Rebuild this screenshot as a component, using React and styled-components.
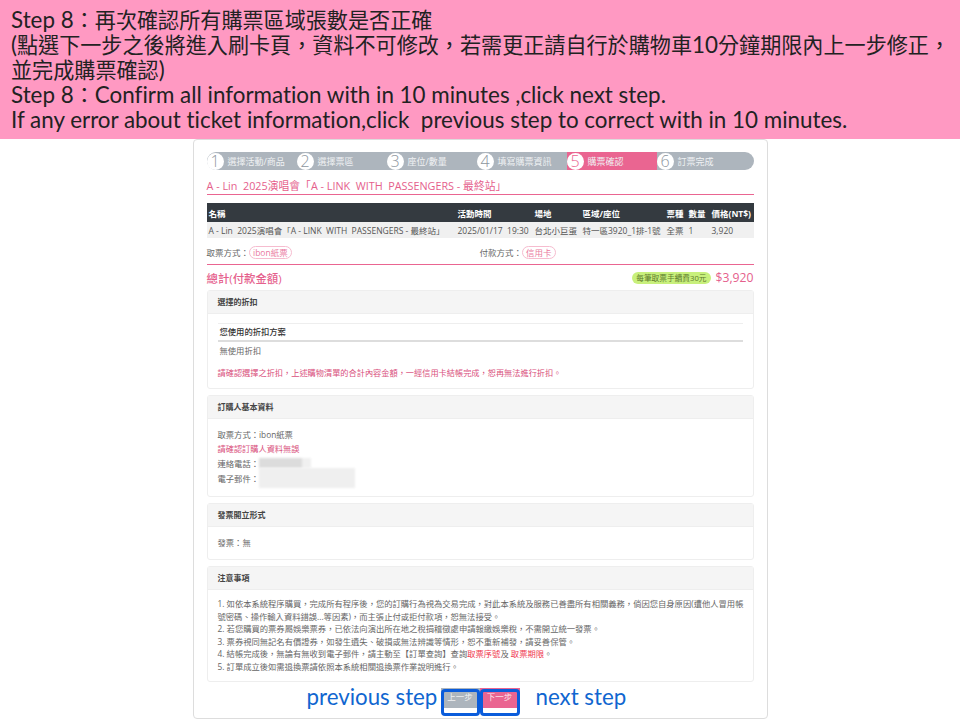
import React from 'react'
import styled, { createGlobalStyle } from 'styled-components'

const GlobalStyle = createGlobalStyle`
  html, body {
    margin: 0;
    padding: 0;
    background: #fff;
    overflow: hidden;
  }
  * { box-sizing: border-box; }
`

const STEPS = ['選擇活動/商品', '選擇票區', '座位/數量', '填寫購票資訊', '購票確認', '訂票完成']
const EVENT = 'A - Lin  2025演唱會「A - LINK  WITH  PASSENGERS - 最終站」'

const App = () => {
  return (
    <Page>
      <GlobalStyle />
      <Banner>
        <BannerLine>Step 8<Cjk>：再次確認所有購票區域張數是否正確</Cjk></BannerLine>
        <BannerLine>(<Cjk>點選下一步之後將進入刷卡頁，資料不可修改，若需更正請自行於購物車</Cjk>10<Cjk>分鐘期限內上一步修正，</Cjk></BannerLine>
        <BannerLine><Cjk>並完成購票確認</Cjk>)</BannerLine>
        <BannerLine>Step 8<Cjk>：</Cjk>Confirm all information with in 10 minutes ,click next step.</BannerLine>
        <BannerLine>If any error about ticket information,click  previous step to correct with in 10 minutes.</BannerLine>
      </Banner>

      <Card>
        <Steps>
          {STEPS.map((s, i) => (
            <Step key={s} $active={i === 4}>
              <StepNum $active={i === 4}>{i + 1}</StepNum>
              <span>{s}</span>
            </Step>
          ))}
        </Steps>

        <EventTitle>{EVENT}</EventTitle>

        <HeadRow>
          <span>名稱</span>
          <span>活動時間</span>
          <span>場地</span>
          <span>區域/座位</span>
          <span>票種</span>
          <span>數量</span>
          <span>價格(NT$)</span>
        </HeadRow>
        <DataRow>
          <span>{EVENT}</span>
          <span>2025/01/17  19:30</span>
          <span>台北小巨蛋</span>
          <span>特一區3920_1排-1號</span>
          <span>全票</span>
          <span>1</span>
          <span>3,920</span>
        </DataRow>

        <Methods>
          <Method>取票方式：<Tag>ibon紙票</Tag></Method>
          <Method>付款方式：<Tag>信用卡</Tag></Method>
        </Methods>

        <Total>
          <TotalLabel>總計(付款金額)</TotalLabel>
          <Fee>每筆取票手續費30元</Fee>
          <Amount>$3,920</Amount>
        </Total>

        <Panel $height={99}>
          <PanelHead>選擇的折扣</PanelHead>
          <DiscountBody>
            <DiscountHead>您使用的折扣方案</DiscountHead>
            <DiscountText>無使用折扣</DiscountText>
            <Warn>請確認選擇之折扣，上述購物清單的合計內容金額，一經信用卡結帳完成，恕再無法進行折扣。</Warn>
          </DiscountBody>
        </Panel>

        <Panel $height={102}>
          <PanelHead>訂購人基本資料</PanelHead>
          <PanelBody>
            <Line>取票方式：ibon紙票</Line>
            <Line><Warn as="span">請確認訂購人資料無誤</Warn></Line>
            <Line>連絡電話：<PhoneBlur /></Line>
            <Line>電子郵件：<MailBlur /></Line>
          </PanelBody>
        </Panel>

        <Panel $height={57}>
          <PanelHead>發票開立形式</PanelHead>
          <PanelBody>
            <Line>發票：無</Line>
          </PanelBody>
        </Panel>

        <Panel $height={116}>
          <PanelHead>注意事項</PanelHead>
          <Notes>
            <div>1. 如依本系統程序購買，完成所有程序後，您的訂購行為視為交易完成，對此本系統及服務已善盡所有相關義務，倘因您自身原因(遭他人冒用帳</div>
            <div>號密碼、操作輸入資料錯誤...等因素)，而主張止付或拒付款項，恕無法接受。</div>
            <div>2. 若您購買的票券屬娛樂票券，已依法向演出所在地之稅捐稽徵處申請報繳娛樂稅，不需開立統一發票。</div>
            <div>3. 票券視同無記名有價證券，如發生遺失、破損或無法辨識等情形，恕不重新補發，請妥善保管。</div>
            <div>4. 結帳完成後，無論有無收到電子郵件，請主動至【訂單查詢】查詢<Red>取票序號</Red>及 <Red>取票期限</Red>。</div>
            <div>5. 訂單成立後如需退換票請依照本系統相關退換票作業說明進行。</div>
          </Notes>
        </Panel>

        <Footer>
          <Hint>previous step</Hint>
          <Frame $width={39}>
            <StepButton $color="#adb5bd">上一步</StepButton>
          </Frame>
          <Frame $width={40}>
            <StepButton $color="#ea6591">下一步</StepButton>
          </Frame>
          <NextHint>next step</NextHint>
        </Footer>
      </Card>
    </Page>
  )
}

const Page = styled.div`
  width: 960px;
  height: 720px;
  overflow: hidden;
  display: flex;
  flex-direction: column;
  align-items: center;
`

const Banner = styled.div`
  width: 960px;
  height: 139px;
  flex-shrink: 0;
  background: #ff99c2;
  padding: 7px 0 0 11px;
  font-family: "Lato", "Noto Sans CJK TC", sans-serif;
  font-size: 22.4px;
  color: #222;
  white-space: pre;
  font-variant-ligatures: none;
`

const BannerLine = styled.div`
  height: 25px;
  line-height: 25px;
`

const Cjk = styled.span`
  font-size: 21.1px;
`

const Card = styled.div`
  width: 575px;
  height: 580px;
  flex-shrink: 0;
  border: 1px solid #ddd;
  border-radius: 4px;
  padding: 12px 12px 0 13px;
  font-family: "Open Sans", "Noto Sans CJK TC", sans-serif;
  font-size: 8.5px;
  color: #666;
  white-space: pre;
`

const Steps = styled.div`
  display: grid;
  grid-template-columns: repeat(5, 90px) 1fr;
  width: 547px;
  height: 18px;
  background: #adb5bd;
  border-radius: 9px;
`

const Step = styled.div`
  display: flex;
  align-items: center;
  gap: 4px;
  color: #f0f2f4;
  font-size: 9px;
  background: ${p => (p.$active ? '#ea6591' : 'transparent')};
`

const StepNum = styled.span`
  width: 17px;
  height: 17px;
  border-radius: 50%;
  background: #fff;
  color: ${p => (p.$active ? '#ea6591' : '#8d969e')};
  font-size: 16px;
  font-weight: 300;
  line-height: 17px;
  text-align: center;
  flex-shrink: 0;
`

const EventTitle = styled.div`
  margin-top: 8px;
  height: 17px;
  width: 547px;
  border-bottom: 1px solid #ea6591;
  color: #e5608c;
  font-size: 10.8px;
  line-height: 15px;
`

const columns = '249px 77px 48px 84px 22px 23px 1fr'

const HeadRow = styled.div`
  display: grid;
  grid-template-columns: ${columns};
  align-items: center;
  width: 547px;
  height: 19px;
  margin-top: 8px;
  padding-left: 2px;
  background: #343a40;
  color: #fff;
  font-weight: 700;
  font-size: 8.5px;
`

const DataRow = styled(HeadRow)`
  height: 16px;
  margin-top: 0;
  background: #f0f0f0;
  color: #555;
  font-weight: 400;
`

const Methods = styled.div`
  display: grid;
  grid-template-columns: 273px 1fr;
  align-items: center;
  width: 547px;
  height: 27px;
  padding-top: 2px;
  border-bottom: 1px solid #ea6591;
`

const Method = styled.div`
  display: flex;
  align-items: center;
`

const Tag = styled.span`
  height: 13px;
  padding: 0 3px;
  border: 1px solid #f6bccf;
  border-radius: 7px;
  color: #ea7a9f;
  line-height: 11px;
`

const Total = styled.div`
  display: flex;
  align-items: center;
  width: 547px;
  height: 25px;
`

const TotalLabel = styled.span`
  color: #e5608c;
  font-size: 11.4px;
  font-weight: 500;
  margin-right: auto;
`

const Fee = styled.span`
  height: 12px;
  padding: 0 4px;
  border-radius: 6px;
  background: #c8f07c;
  color: #5d7a2c;
  font-size: 7.7px;
  line-height: 12px;
`

const Amount = styled.span`
  margin-left: 5px;
  color: #e5608c;
  font-size: 12.2px;
`

const Panel = styled.div`
  width: 547px;
  height: ${p => p.$height}px;
  margin-bottom: 6px;
  border: 1px solid #eee;
  border-radius: 3px;
  font-size: 8.3px;
`

const PanelHead = styled.div`
  height: 23px;
  padding-left: 10px;
  background: #f5f5f5;
  border-bottom: 1px solid #eee;
  color: #444;
  font-weight: 700;
  font-size: 8px;
  line-height: 21px;
`

const PanelBody = styled.div`
  padding: 8px 10px 0;
`

const DiscountBody = styled.div`
  padding: 9px 10px 0;
`

const DiscountHead = styled.div`
  height: 19px;
  padding-left: 2px;
  border-top: 1px solid #eee;
  border-bottom: 2px solid #ddd;
  color: #333;
  font-weight: 500;
  line-height: 16px;
`

const DiscountText = styled.div`
  height: 23px;
  padding-left: 2px;
  line-height: 18px;
`

const Warn = styled.div`
  color: #d9507d;
  font-size: 8.2px;
  line-height: 16px;
`

const Line = styled.div`
  display: flex;
  align-items: center;
  height: 14.6px;
`

const PhoneBlur = styled.span`
  display: block;
  align-self: flex-start;
  width: 52px;
  height: 10px;
  margin-top: 2px;
  background: linear-gradient(to right, #dcdcdc 0 82%, #f0f0f0 82%);
  filter: blur(1px);
`

const MailBlur = styled.span`
  display: block;
  align-self: flex-start;
  width: 96px;
  height: 20px;
  margin-top: -3px;
  background: #efefef;
  filter: blur(1px);
`

const Notes = styled.div`
  padding: 8px 10px 0;
  line-height: 12.5px;
`

const Red = styled.span`
  color: #f0384f;
`

const Footer = styled.div`
  display: flex;
  align-items: flex-start;
  width: 547px;
  padding-left: 100px;
`

const Hint = styled.span`
  width: 134px;
  color: #1066d0;
  font-family: "Lato", sans-serif;
  font-size: 22.3px;
  line-height: 18px;
`

const NextHint = styled(Hint)`
  width: auto;
  margin-left: 16px;
`

const Frame = styled.div`
  position: relative;
  width: ${p => p.$width}px;
  height: 28px;
  &::after {
    content: '';
    position: absolute;
    inset: 1px 0 0 0;
    border: 3px solid #0a5cdb;
    border-radius: 4px;
  }
`

const StepButton = styled.div`
  height: 20px;
  background: ${p => p.$color};
  color: rgba(255, 255, 255, 0.85);
  font-size: 8.5px;
  line-height: 17px;
  text-align: center;
`

export default App
